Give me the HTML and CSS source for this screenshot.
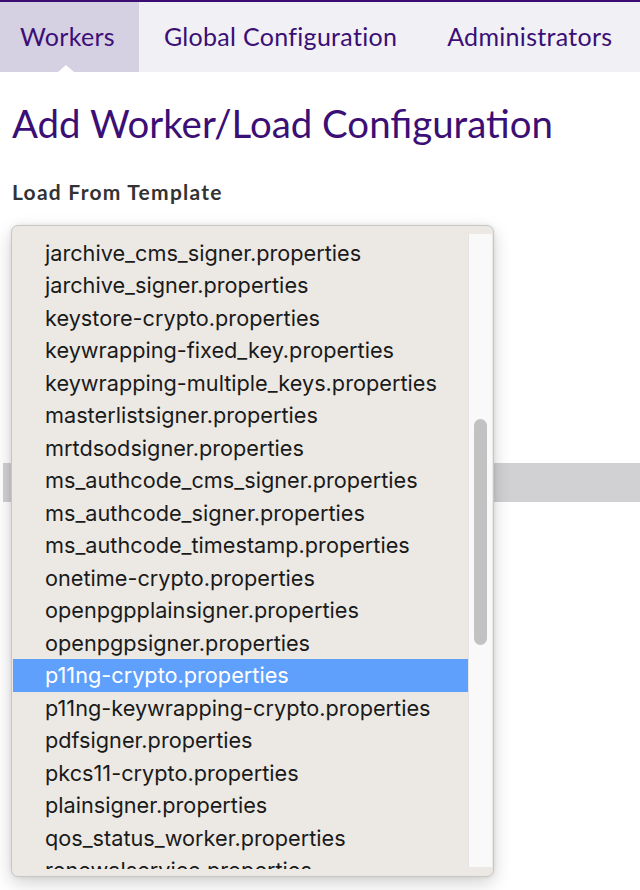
FILE: index.html
```html
<!DOCTYPE html>
<html>
<head>
<meta charset="utf-8">
<link rel="stylesheet" href="styles.css">
</head>
<body>
<nav class="tabs">
  <a class="tab active">Workers</a>
  <a class="tab">Global Configuration</a>
  <a class="tab">Administrators</a>
</nav>
<main class="content">
  <h1 class="title">Add Worker/Load Configuration</h1>
  <div class="field-label">Load From Template</div>
  <div class="table-head"></div>
  <div class="popup">
    <div class="list">
      <div class="item">jarchive_cms_signer.properties</div>
      <div class="item">jarchive_signer.properties</div>
      <div class="item">keystore-crypto.properties</div>
      <div class="item">keywrapping-fixed_key.properties</div>
      <div class="item">keywrapping-multiple_keys.properties</div>
      <div class="item">masterlistsigner.properties</div>
      <div class="item">mrtdsodsigner.properties</div>
      <div class="item">ms_authcode_cms_signer.properties</div>
      <div class="item">ms_authcode_signer.properties</div>
      <div class="item">ms_authcode_timestamp.properties</div>
      <div class="item">onetime-crypto.properties</div>
      <div class="item">openpgpplainsigner.properties</div>
      <div class="item">openpgpsigner.properties</div>
      <div class="item selected">p11ng-crypto.properties</div>
      <div class="item">p11ng-keywrapping-crypto.properties</div>
      <div class="item">pdfsigner.properties</div>
      <div class="item">pkcs11-crypto.properties</div>
      <div class="item">plainsigner.properties</div>
      <div class="item">qos_status_worker.properties</div>
      <div class="item">renewalservice.properties</div>
    </div>
    <div class="scrollbar"><div class="thumb"></div></div>
  </div>
</main>
</body>
</html>
```
FILE: styles.css
```css
html, body {
  margin: 0;
  padding: 0;
  background: #ffffff;
}
body {
  position: relative;
  min-height: 890px;
  font-family: "Lato", "Liberation Sans", sans-serif;
}
.tabs {
  display: flex;
  height: 70px;
  border-top: 2px solid #3b0d73;
  background: #f0f0f5;
}
.tab {
  position: relative;
  display: flex;
  align-items: center;
  padding: 0 25px 2px;
  font-size: 25px;
  letter-spacing: 0.3px;
  color: #3b0f75;
  white-space: nowrap;
}
.tab.active {
  background: #d6d0e3;
  padding-left: 20px;
  padding-right: 24px;
}
.tab.active::after {
  content: "";
  position: absolute;
  left: 58px;
  bottom: 0;
  border-left: 8px solid transparent;
  border-right: 8px solid transparent;
  border-bottom: 7px solid #ffffff;
}
.content {
  padding: 0 12px;
}
.title {
  margin: 24px 0 0;
  font-size: 38.4px;
  font-weight: 400;
  color: #3b0f75;
  line-height: 54px;
}
.field-label {
  margin-top: 29px;
  font-size: 21px;
  font-weight: 700;
  letter-spacing: 1.25px;
  color: #333333;
  line-height: 26px;
}
.table-head {
  margin: 258px -12px 0 -9px;
  height: 39px;
  background: #d1d1d3;
}
.popup {
  position: absolute;
  left: 11px;
  top: 225px;
  width: 481px;
  height: 650px;
  border: 1px solid #c9c7c4;
  border-radius: 7px;
  background: #ece9e4;
  box-shadow: 0 6px 18px rgba(0, 0, 0, 0.18), 0 0 4px rgba(0, 0, 0, 0.08);
  display: flex;
  overflow: hidden;
}
.list {
  flex: 1;
  padding: 10.5px 0 0 1px;
  height: 632px;
  overflow: hidden;
  font-family: "Inter", "Noto Sans", sans-serif;
  font-size: 21.7px;
  color: #1a1a1a;
}
.item {
  height: 32.5px;
  line-height: 32.5px;
  padding-left: 32px;
  white-space: nowrap;
}
.item.selected {
  background: #5fa0fc;
  color: #ffffff;
}
.scrollbar {
  width: 23px;
  margin: 8px 1px 9px 0;
  background: #f9f9f9;
  border-left: 1px solid #e4e4e4;
  position: relative;
}
.thumb {
  position: absolute;
  left: 5px;
  top: 185px;
  width: 13px;
  height: 226px;
  border-radius: 7px;
  background: #c2c2c2;
}
```
